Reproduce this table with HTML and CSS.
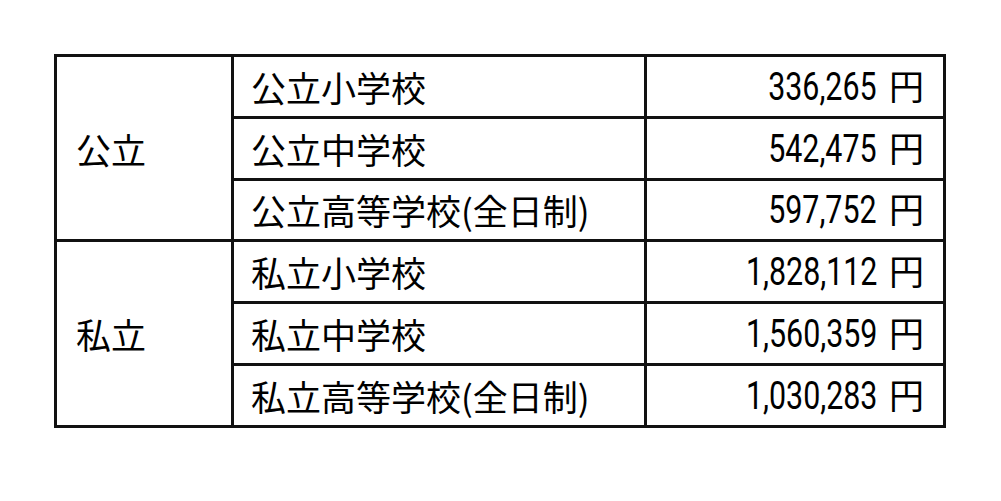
FILE: index.html
```html
<!DOCTYPE html>
<html lang="ja">
<head>
<meta charset="utf-8">
<link rel="stylesheet" href="styles.css">
</head>
<body>
<table class="cost">
  <colgroup><col class="c1"><col class="c2"><col class="c3"></colgroup>
  <tbody>
    <tr><th rowspan="3">公立</th><td class="name">公立小学校</td><td class="amt"><span class="num">336,265</span><span class="yen">円</span></td></tr>
    <tr><td class="name">公立中学校</td><td class="amt"><span class="num">542,475</span><span class="yen">円</span></td></tr>
    <tr><td class="name">公立高等学校(全日制)</td><td class="amt"><span class="num">597,752</span><span class="yen">円</span></td></tr>
    <tr><th rowspan="3">私立</th><td class="name">私立小学校</td><td class="amt"><span class="num">1,828,112</span><span class="yen">円</span></td></tr>
    <tr><td class="name">私立中学校</td><td class="amt"><span class="num">1,560,359</span><span class="yen">円</span></td></tr>
    <tr><td class="name">私立高等学校(全日制)</td><td class="amt"><span class="num">1,030,283</span><span class="yen">円</span></td></tr>
  </tbody>
</table>
</body>
</html>
```

FILE: styles.css
```css
html, body {
  margin: 0;
  padding: 0;
  background: #fff;
}
body {
  padding: 54px 0 0 54px;
  font-family: "Noto Sans CJK JP", "Noto Sans", sans-serif;
  color: #000;
}
.cost {
  border-collapse: collapse;
  width: 889px;
  table-layout: fixed;
  border: 3px solid #111;
}
.c1 { width: 177px; }
.c2 { width: 413px; }
.c3 { width: 299px; }
.cost tr { height: 61.8px; }
.cost th, .cost td {
  padding: 0;
  font-size: 35px;
  line-height: 1;
  font-weight: 400;
  vertical-align: middle;
  white-space: nowrap;
}
.cost th {
  text-align: left;
  padding-left: 19px;
  border: 3px solid #111;
}
.cost td.name {
  padding-left: 17px;
  border: 3px solid #111;
}
.cost td.amt {
  text-align: right;
  padding-right: 19px;
  border: 3px solid #111;
}
.num {
  display: inline-block;
  font-family: Roboto, "Liberation Sans", sans-serif;
  font-weight: 400;
  font-size: 38px;
  transform: scaleX(0.8);
  transform-origin: right center;
}
.yen {
  margin-left: 12px;
}
```
